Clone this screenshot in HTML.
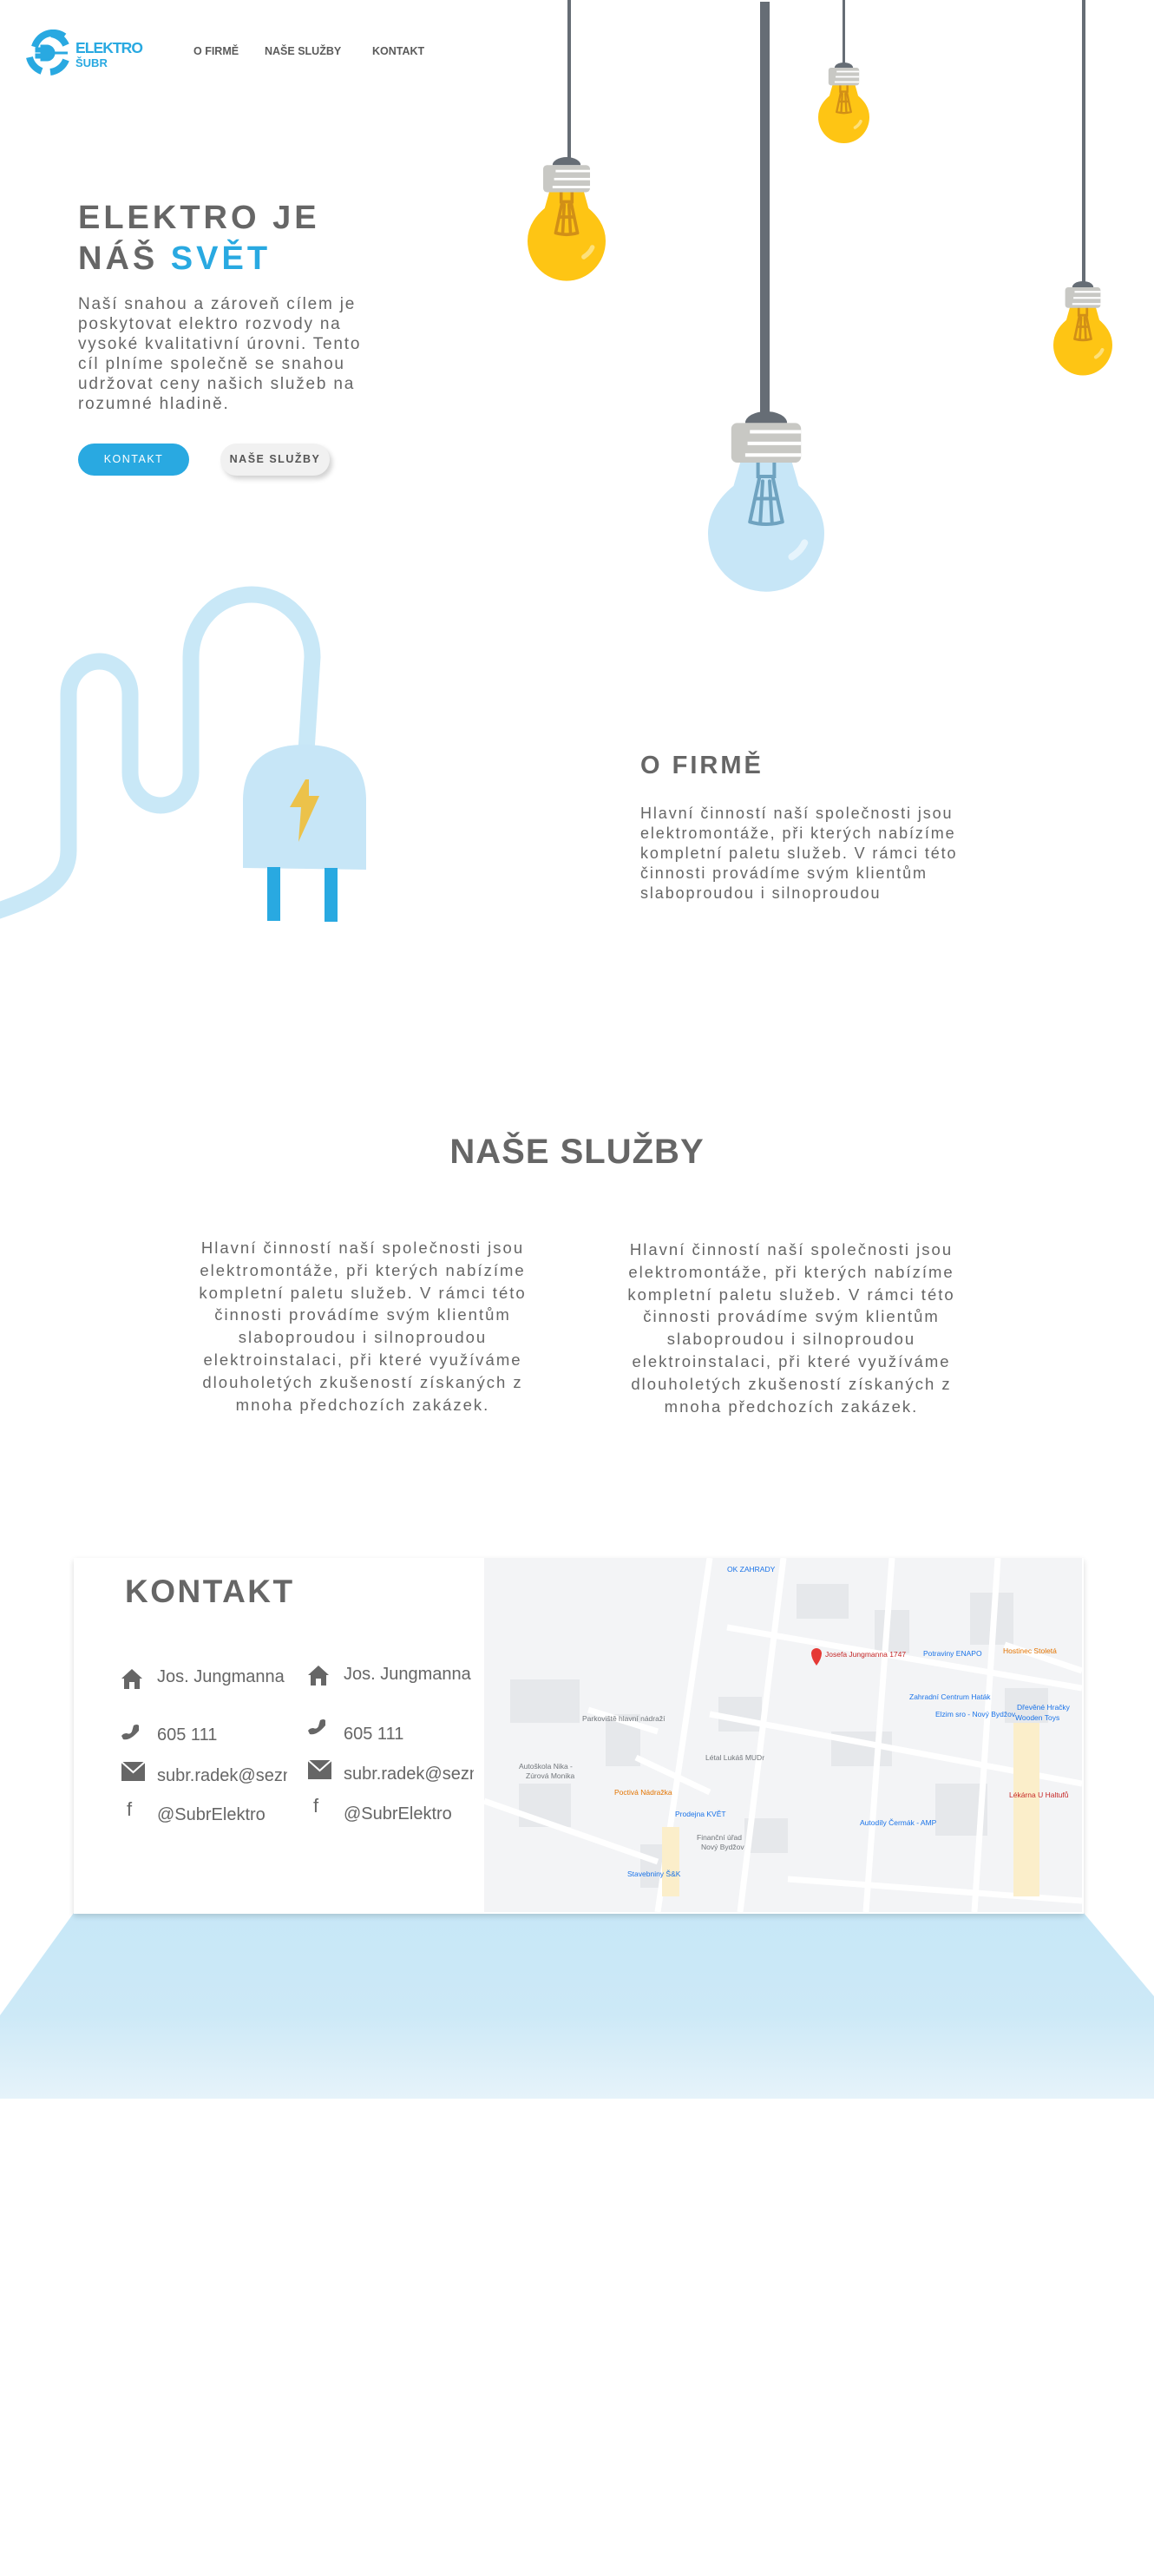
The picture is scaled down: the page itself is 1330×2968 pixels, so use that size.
<!DOCTYPE html>
<html><head><meta charset="utf-8">
<style>
*{margin:0;padding:0;box-sizing:border-box}
body{width:1330px;height:2968px;background:#fff;position:relative;overflow:hidden;font-family:"Liberation Sans",Arial,sans-serif;color:#666}
.abs{position:absolute}
.nav{position:absolute;top:52px;font-size:12.5px;font-weight:bold;color:#5a5a5a}
h1{position:absolute;left:90px;top:228px;font-size:38px;line-height:47px;letter-spacing:4px;color:#666;font-weight:bold}
h1 span{color:#29a9e1}
.p{position:absolute;letter-spacing:2px;color:#666}
.btn{position:absolute;top:511px;height:37px;border-radius:19px;font-size:12.5px;text-align:center;line-height:37px;letter-spacing:1.5px}
.ci{position:absolute;font-size:20px;color:#666;white-space:nowrap;overflow:hidden}
</style></head><body>

<!-- logo -->
<svg class="abs" style="left:28px;top:34px" width="160" height="56" viewBox="0 0 160 56">
 <g fill="none" stroke="#29a9e1" stroke-width="8">
  <path d="M12 20 A22 22 0 0 1 46 8"/>
  <path d="M31 5 A22 22 0 0 1 48 18"/>
  <path d="M48 35 A22 22 0 0 1 30 49"/>
  <path d="M20 48 A22 22 0 0 1 6 32"/>
 </g>
 <path d="M14 22 h6 v-3 h6 a8 8 0 0 1 0 16 h-6 v-3 h-6 v-3 h6 v-4 h-6z M32 27 h18" fill="#29a9e1" stroke="#29a9e1" stroke-width="3"/>
 <text x="59" y="27" font-size="17.5" font-weight="bold" fill="#29a9e1" font-family="Liberation Sans" textLength="78">ELEKTRO</text>
 <text x="59" y="43" font-size="13" font-weight="bold" fill="#29a9e1" font-family="Liberation Sans">ŠUBR</text>
</svg>
<div class="nav" style="left:223px">O FIRMĚ</div>
<div class="nav" style="left:305px">NAŠE SLUŽBY</div>
<div class="nav" style="left:429px">KONTAKT</div>

<h1>ELEKTRO JE<br>NÁŠ <span>SVĚT</span></h1>
<div class="p" style="left:90px;top:339px;font-size:19px;line-height:23px;letter-spacing:1.8px">Naší snahou a zároveň cílem je<br>poskytovat elektro rozvody na<br>vysoké kvalitativní úrovni. Tento<br>cíl plníme společně se snahou<br>udržovat ceny našich služeb na<br>rozumné hladině.</div>
<div class="btn" style="left:90px;width:128px;background:#29a9e1;color:#fff">KONTAKT</div>
<div class="btn" style="left:254px;width:126px;background:#f1f1f1;color:#555;font-weight:bold;box-shadow:3px 4px 6px rgba(0,0,0,.18)">NAŠE SLUŽBY</div>

<!-- bulbs -->
<svg class="abs" style="left:0;top:0" width="1330" height="700" viewBox="0 0 1330 700">
 <defs>
  <g id="by">
   <path d="M32 10 A18 10 0 0 1 68 10 Z" fill="#666d75"/>
   <path d="M28 43 L72 43 L78 64 Q100 82 100 105 A50 50 0 0 1 0 105 Q0 82 22 64 Z" fill="#fec514"/>
   <g fill="none" stroke="#d18f17" stroke-width="4" stroke-linecap="round"><path d="M43 43 V56 H57 V43 M44 58 L36 95 M56 58 L64 95 M47 60 L45 95 M53 60 L55 95 M36 95 Q50 99 64 95 M41 75 H59"/></g>
   <path d="M72 125 Q80 120 83 113" stroke="#fde07a" stroke-width="6" stroke-linecap="round" fill="none"/>
   <rect x="20" y="10" width="60" height="34" rx="5" fill="#c8c8c4"/>
   <g fill="#fff"><rect x="36" y="16" width="44" height="3"/><rect x="34" y="26" width="46" height="3"/><rect x="32" y="36" width="48" height="3"/></g>
  </g>
  <g id="bb">
   <path d="M32 10 A18 10 0 0 1 68 10 Z" fill="#666d75"/>
   <path d="M28 43 L72 43 L78 64 Q100 82 100 105 A50 50 0 0 1 0 105 Q0 82 22 64 Z" fill="#c7e6f7"/>
   <g fill="none" stroke="#6fa3c0" stroke-width="3" stroke-linecap="round"><path d="M43 43 V56 H57 V43 M44 58 L36 95 M56 58 L64 95 M47 60 L45 95 M53 60 L55 95 M36 95 Q50 99 64 95 M41 75 H59"/></g>
   <path d="M72 125 Q80 120 83 113" stroke="#e6f4fc" stroke-width="6" stroke-linecap="round" fill="none"/>
   <rect x="20" y="10" width="60" height="34" rx="5" fill="#c8c8c4"/>
   <g fill="#fff"><rect x="36" y="16" width="44" height="3"/><rect x="34" y="26" width="46" height="3"/><rect x="32" y="36" width="48" height="3"/></g>
  </g>
 </defs>
 <rect x="654" y="0" width="4" height="186" fill="#666d75"/>
 <use href="#by" transform="translate(608,181) scale(0.9,0.92)"/>
 <rect x="876" y="2" width="11" height="476" fill="#666d75"/>
 <use href="#bb" transform="translate(816,474) scale(1.34,1.34)"/>
 <rect x="971" y="0" width="3" height="75" fill="#666d75"/>
 <use href="#by" transform="translate(943,72) scale(0.59,0.6)"/>
 <rect x="1247" y="0" width="4" height="327" fill="#666d75"/>
 <use href="#by" transform="translate(1214,324) scale(0.68,0.7)"/>
</svg>

<!-- plug -->
<svg class="abs" style="left:0;top:650px" width="460" height="430" viewBox="0 650 460 430">
 <path d="M-10 1052 C40 1035 79 1020 79 980 L79 800 A35.5 38 0 0 1 150 800 L150 890 A35 38 0 0 0 220 890 L220 757 A70 72 0 0 1 360 757 L352 880" fill="none" stroke="#c9e8f7" stroke-width="19"/>
 <path d="M280 1000 L280 920 Q282 858 351 858 Q420 858 422 920 L422 1002 Z" fill="#c7e6f7"/>
 <rect x="308" y="999" width="15" height="62" fill="#29a9e1"/>
 <rect x="374" y="1000" width="15" height="62" fill="#29a9e1"/>
 <path d="M352 898 L356 898 L356 917 L368 917 L344 970 L347 930 L334 930 Z" fill="#ecc24a"/>
</svg>

<div class="abs" style="left:738px;top:866px;font-size:29px;font-weight:bold;letter-spacing:3px;color:#666">O FIRMĚ</div>
<div class="p" style="left:738px;top:926px;font-size:18px;line-height:23px;letter-spacing:1.9px">Hlavní činností naší společnosti jsou<br>elektromontáže, při kterých nabízíme<br>kompletní paletu služeb. V rámci této<br>činnosti provádíme svým klientům<br>slaboproudou i silnoproudou</div>

<div class="abs" style="left:0;width:1330px;top:1305px;text-align:center;font-size:40px;font-weight:bold;letter-spacing:1px;color:#666">NAŠE SLUŽBY</div>
<div class="p" style="left:168px;width:500px;top:1425px;text-align:center;font-size:18.5px;line-height:25.8px">Hlavní činností naší společnosti jsou<br>elektromontáže, při kterých nabízíme<br>kompletní paletu služeb. V rámci této<br>činnosti provádíme svým klientům<br>slaboproudou i silnoproudou<br>elektroinstalaci, při které využíváme<br>dlouholetých zkušeností získaných z<br>mnoha předchozích zakázek.</div>
<div class="p" style="left:662px;width:500px;top:1427px;text-align:center;font-size:18.5px;line-height:25.8px">Hlavní činností naší společnosti jsou<br>elektromontáže, při kterých nabízíme<br>kompletní paletu služeb. V rámci této<br>činnosti provádíme svým klientům<br>slaboproudou i silnoproudou<br>elektroinstalaci, při které využíváme<br>dlouholetých zkušeností získaných z<br>mnoha předchozích zakázek.</div>

<!-- blue floor -->
<svg class="abs" style="left:0;top:2200px" width="1330" height="220">
 <defs><linearGradient id="g" x1="0" y1="0" x2="0" y2="1"><stop offset="0" stop-color="#c7e7f7"/><stop offset="0.55" stop-color="#cde9f7"/><stop offset="1" stop-color="#e6f3fa"/></linearGradient></defs>
 <polygon points="85,4 1249,4 1330,100 1330,218 0,218 0,122" fill="url(#g)"/>
</svg>

<!-- contact card -->
<div class="abs" style="left:85px;top:1795px;width:1164px;height:410px;background:#fff;box-shadow:0 3px 6px rgba(0,0,0,.15)"></div>
<div class="abs" style="left:144px;top:1813px;font-size:37px;font-weight:bold;letter-spacing:2.5px;color:#666">KONTAKT</div>

<svg class="abs" style="left:140px;top:1920px" width="240" height="200">
 <g fill="#666">
  <path d="M0 14 L12 3 L24 14 L21 14 L21 26 L15 26 L15 18 L9 18 L9 26 L3 26 L3 14Z"/>
  <path d="M14 68 q4 -2 6 0 l0 6 q-10 12 -18 10 l-2 -4 q2 -3 6 -3 q4 2 6 -2 z"/>
  <path d="M0 110 h27 v22 h-27z" /><path d="M0 110 l13.5 12 l13.5 -12" stroke="#fff" stroke-width="2" fill="none"/>
 </g>
 <text x="6" y="172" font-size="22" font-family="Liberation Sans" fill="#666">f</text>
</svg>
<svg class="abs" style="left:355px;top:1916px" width="240" height="200">
 <g fill="#666">
  <path d="M0 14 L12 3 L24 14 L21 14 L21 26 L15 26 L15 18 L9 18 L9 26 L3 26 L3 14Z"/>
  <path d="M14 66 q4 -2 6 0 l0 6 q-10 12 -18 10 l-2 -4 q2 -3 6 -3 q4 2 6 -2 z"/>
  <path d="M0 112 h27 v22 h-27z" /><path d="M0 112 l13.5 12 l13.5 -12" stroke="#fff" stroke-width="2" fill="none"/>
 </g>
 <text x="6" y="172" font-size="22" font-family="Liberation Sans" fill="#666">f</text>
</svg>
<div class="ci" style="left:181px;top:1921px;width:150px">Jos. Jungmanna</div>
<div class="ci" style="left:181px;top:1988px;width:150px">605 111</div>
<div class="ci" style="left:181px;top:2035px;width:150px">subr.radek@seznam.cz</div>
<div class="ci" style="left:181px;top:2080px;width:150px">@SubrElektro</div>
<div class="ci" style="left:396px;top:1918px;width:150px">Jos. Jungmanna</div>
<div class="ci" style="left:396px;top:1987px;width:150px">605 111</div>
<div class="ci" style="left:396px;top:2033px;width:150px">subr.radek@seznam.cz</div>
<div class="ci" style="left:396px;top:2079px;width:150px">@SubrElektro</div>

<!-- map -->
<svg class="abs" style="left:558px;top:1795px" width="689" height="408" viewBox="0 0 689 408">
 <rect width="689" height="408" fill="#f3f4f6"/>
 <g fill="#e6e8eb">
  <rect x="360" y="30" width="60" height="40"/><rect x="450" y="60" width="40" height="50"/><rect x="560" y="40" width="50" height="60"/>
  <rect x="30" y="140" width="80" height="50"/><rect x="140" y="180" width="40" height="60"/><rect x="270" y="160" width="50" height="40"/>
  <rect x="400" y="200" width="70" height="40"/><rect x="520" y="260" width="60" height="60"/><rect x="40" y="260" width="60" height="50"/>
  <rect x="300" y="300" width="50" height="40"/><rect x="600" y="150" width="50" height="40"/><rect x="180" y="330" width="40" height="50"/>
 </g>
 <g fill="none" stroke="#fff" stroke-width="7">
  <path d="M260 0 L200 408"/><path d="M345 0 L295 408"/><path d="M470 0 L440 408"/><path d="M592 0 L565 408"/>
  <path d="M280 80 L689 150"/><path d="M260 180 L689 260"/><path d="M0 280 L200 350"/><path d="M175 230 L260 270"/><path d="M120 175 L200 200"/>
  <path d="M350 370 L689 395"/><path d="M600 100 L689 130"/>
 </g>
 <g fill="#fbeeca"><rect x="610" y="190" width="30" height="200"/><rect x="205" y="310" width="20" height="80"/></g>
 <path d="M377 110 a6 6 0 1 1 12 0 q0 6 -6 14 q-6 -8 -6 -14z" fill="#e53935"/>
 <g font-family="Liberation Sans" font-size="8.5">
  <text x="393" y="114" fill="#c62828">Josefa Jungmanna 1747</text>
  <text x="280" y="16" fill="#1a73e8">OK ZAHRADY</text>
  <text x="506" y="113" fill="#1a73e8">Potraviny ENAPO</text>
  <text x="598" y="110" fill="#e37400">Hostinec Stoletá</text>
  <text x="490" y="163" fill="#1a73e8">Zahradní Centrum Haták</text>
  <text x="520" y="183" fill="#1a73e8">Elzim sro - Nový Bydžov</text>
  <text x="614" y="175" fill="#1a73e8">Dřevěné Hračky</text>
  <text x="612" y="187" fill="#1a73e8">Wooden Toys</text>
  <text x="113" y="188" fill="#70757a">Parkoviště hlavní nádraží</text>
  <text x="255" y="233" fill="#70757a">Létal Lukáš MUDr</text>
  <text x="40" y="243" fill="#70757a">Autoškola Nika -</text>
  <text x="48" y="254" fill="#70757a">Zúrová Monika</text>
  <text x="150" y="273" fill="#e37400">Poctivá Nádražka</text>
  <text x="220" y="298" fill="#1a73e8">Prodejna KVĚT</text>
  <text x="245" y="325" fill="#70757a">Finanční úřad</text>
  <text x="250" y="336" fill="#70757a">Nový Bydžov</text>
  <text x="433" y="308" fill="#1a73e8">Autodíly Čermák - AMP</text>
  <text x="605" y="276" fill="#c62828">Lékárna U Haltufů</text>
  <text x="165" y="367" fill="#1a73e8">Stavebniny Š&amp;K</text>
 </g>
</svg>
</body></html>
